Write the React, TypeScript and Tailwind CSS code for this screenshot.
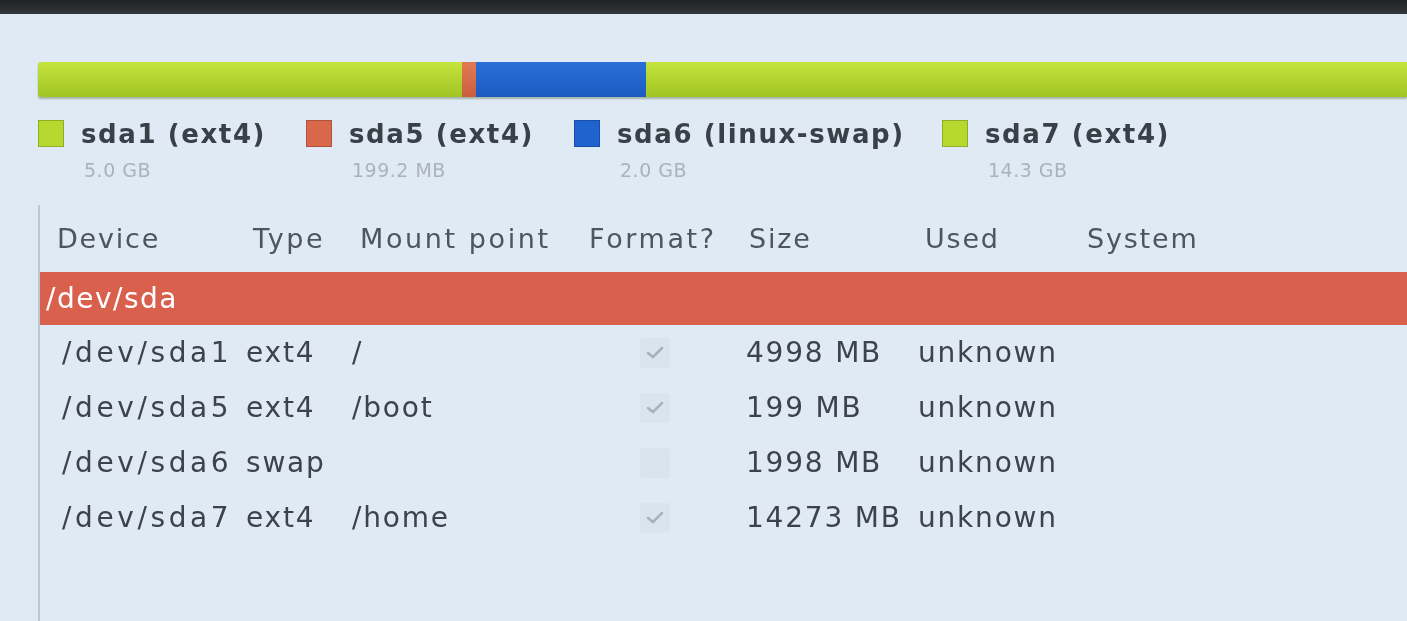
import React from 'react';

const legend = [
  { name: 'sda1 (ext4)', size: '5.0 GB', color: 'bg-[#b5d92e]', w: 'w-[268px]' },
  { name: 'sda5 (ext4)', size: '199.2 MB', color: 'bg-[#d9684a]', w: 'w-[268px]' },
  { name: 'sda6 (linux-swap)', size: '2.0 GB', color: 'bg-[#1f63cf]', w: 'w-[368px]' },
  { name: 'sda7 (ext4)', size: '14.3 GB', color: 'bg-[#b5d92e]', w: 'w-[300px]' },
];

const rows = [
  { dev: '/dev/sda1', type: 'ext4', mount: '/', format: true, size: '4998 MB', used: 'unknown' },
  { dev: '/dev/sda5', type: 'ext4', mount: '/boot', format: true, size: '199 MB', used: 'unknown' },
  { dev: '/dev/sda6', type: 'swap', mount: '', format: false, size: '1998 MB', used: 'unknown' },
  { dev: '/dev/sda7', type: 'ext4', mount: '/home', format: true, size: '14273 MB', used: 'unknown' },
];

// column starts (page x): 60, 249, 356, 589, 749, 921, 1087
const cols = 'grid grid-cols-[209px_107px_233px_160px_172px_166px_1fr]';

function Check({ on }: { on: boolean }) {
  return (
    <div className="ml-[51px] w-[30px] h-[30px] rounded-[4px] bg-[#d3dee8]/50 flex items-center justify-center">
      {on && (
        <svg width="20" height="16" viewBox="0 0 20 16">
          <path d="M3 8 L8 12 L17 3" fill="none" stroke="#a8b2bb" strokeWidth="2.5" strokeLinecap="round" />
        </svg>
      )}
    </div>
  );
}

export default function App() {
  return (
    <div
      className="w-[1407px] h-[621px] overflow-hidden bg-[#dfeaf4] text-[#3d434a] blur-[0.4px]"
      style={{ fontFamily: '"DejaVu Sans", "Open Sans", sans-serif' }}
    >
      {/* bezel */}
      <div className="h-[14px] bg-gradient-to-b from-[#1e2124] to-[#34383c]" />

      <div className="pl-[38px] pt-[48px]">
        {/* partition bar */}
        <div className="flex h-[35px] rounded-l-[3px] overflow-hidden shadow-[0_2px_2px_rgba(60,80,20,0.35)]">
          <div className="w-[424px] bg-gradient-to-b from-[#c4e33c] to-[#a1c524]" />
          <div className="w-[14px] bg-gradient-to-b from-[#e37a55] to-[#c95e3e]" />
          <div className="w-[170px] bg-gradient-to-b from-[#2a6fd8] to-[#1b5bc2]" />
          <div className="flex-1 bg-gradient-to-b from-[#c4e33c] to-[#a1c524]" />
        </div>

        {/* legend */}
        <div className="flex mt-[21px]">
          {legend.map((l) => (
            <div key={l.name} className={`flex gap-[17px] ${l.w}`}>
              <div className={`w-[26px] h-[27px] mt-[2px] ${l.color} border border-black/20`} />
              <div className="flex flex-col">
                <span className="text-[26px] leading-[32px] font-bold tracking-[1.6px] text-[#3a4047] whitespace-nowrap">{l.name}</span>
                <span className="mt-[8px] text-[19px] leading-[24px] pl-[3px] tracking-[0.5px] text-[#aab3bb] whitespace-nowrap">{l.size}</span>
              </div>
            </div>
          ))}
        </div>

        {/* table */}
        <div className="mt-[23px] border-l-2 border-[#bcc7d1] h-[420px]">
          <div className={`${cols} h-[67px] items-center text-[27px] tracking-[1.8px] text-[#4d565f] pt-[2px] whitespace-nowrap`}>
            <span className="pl-[17px]">Device</span>
            <span className="ml-[4px] tracking-[2.5px]">Type</span>
            <span className="ml-[4px] tracking-[2.6px]">Mount point</span>
            <span className="tracking-[2.6px]">Format?</span>
            <span>Size</span>
            <span className="ml-[4px]">Used</span>
            <span>System</span>
          </div>
          <div className="h-[53px] bg-[#da604e] flex items-center pl-[6px] text-[28px] tracking-[1.5px] text-white">
            /dev/sda
          </div>
          {rows.map((r) => (
            <div key={r.dev} className={`${cols} h-[55px] items-center text-[28px] tracking-[1.8px] whitespace-nowrap`}>
              <span className="pl-[22px] tracking-[3.6px]">{r.dev}</span>
              <span className="-ml-[3px]">{r.type}</span>
              <span className="-ml-[4px]">{r.mount}</span>
              <Check on={r.format} />
              <span className="-ml-[3px]">{r.size}</span>
              <span className="-ml-[3px]">{r.used}</span>
              <span />
            </div>
          ))}
        </div>
      </div>
    </div>
  );
}
